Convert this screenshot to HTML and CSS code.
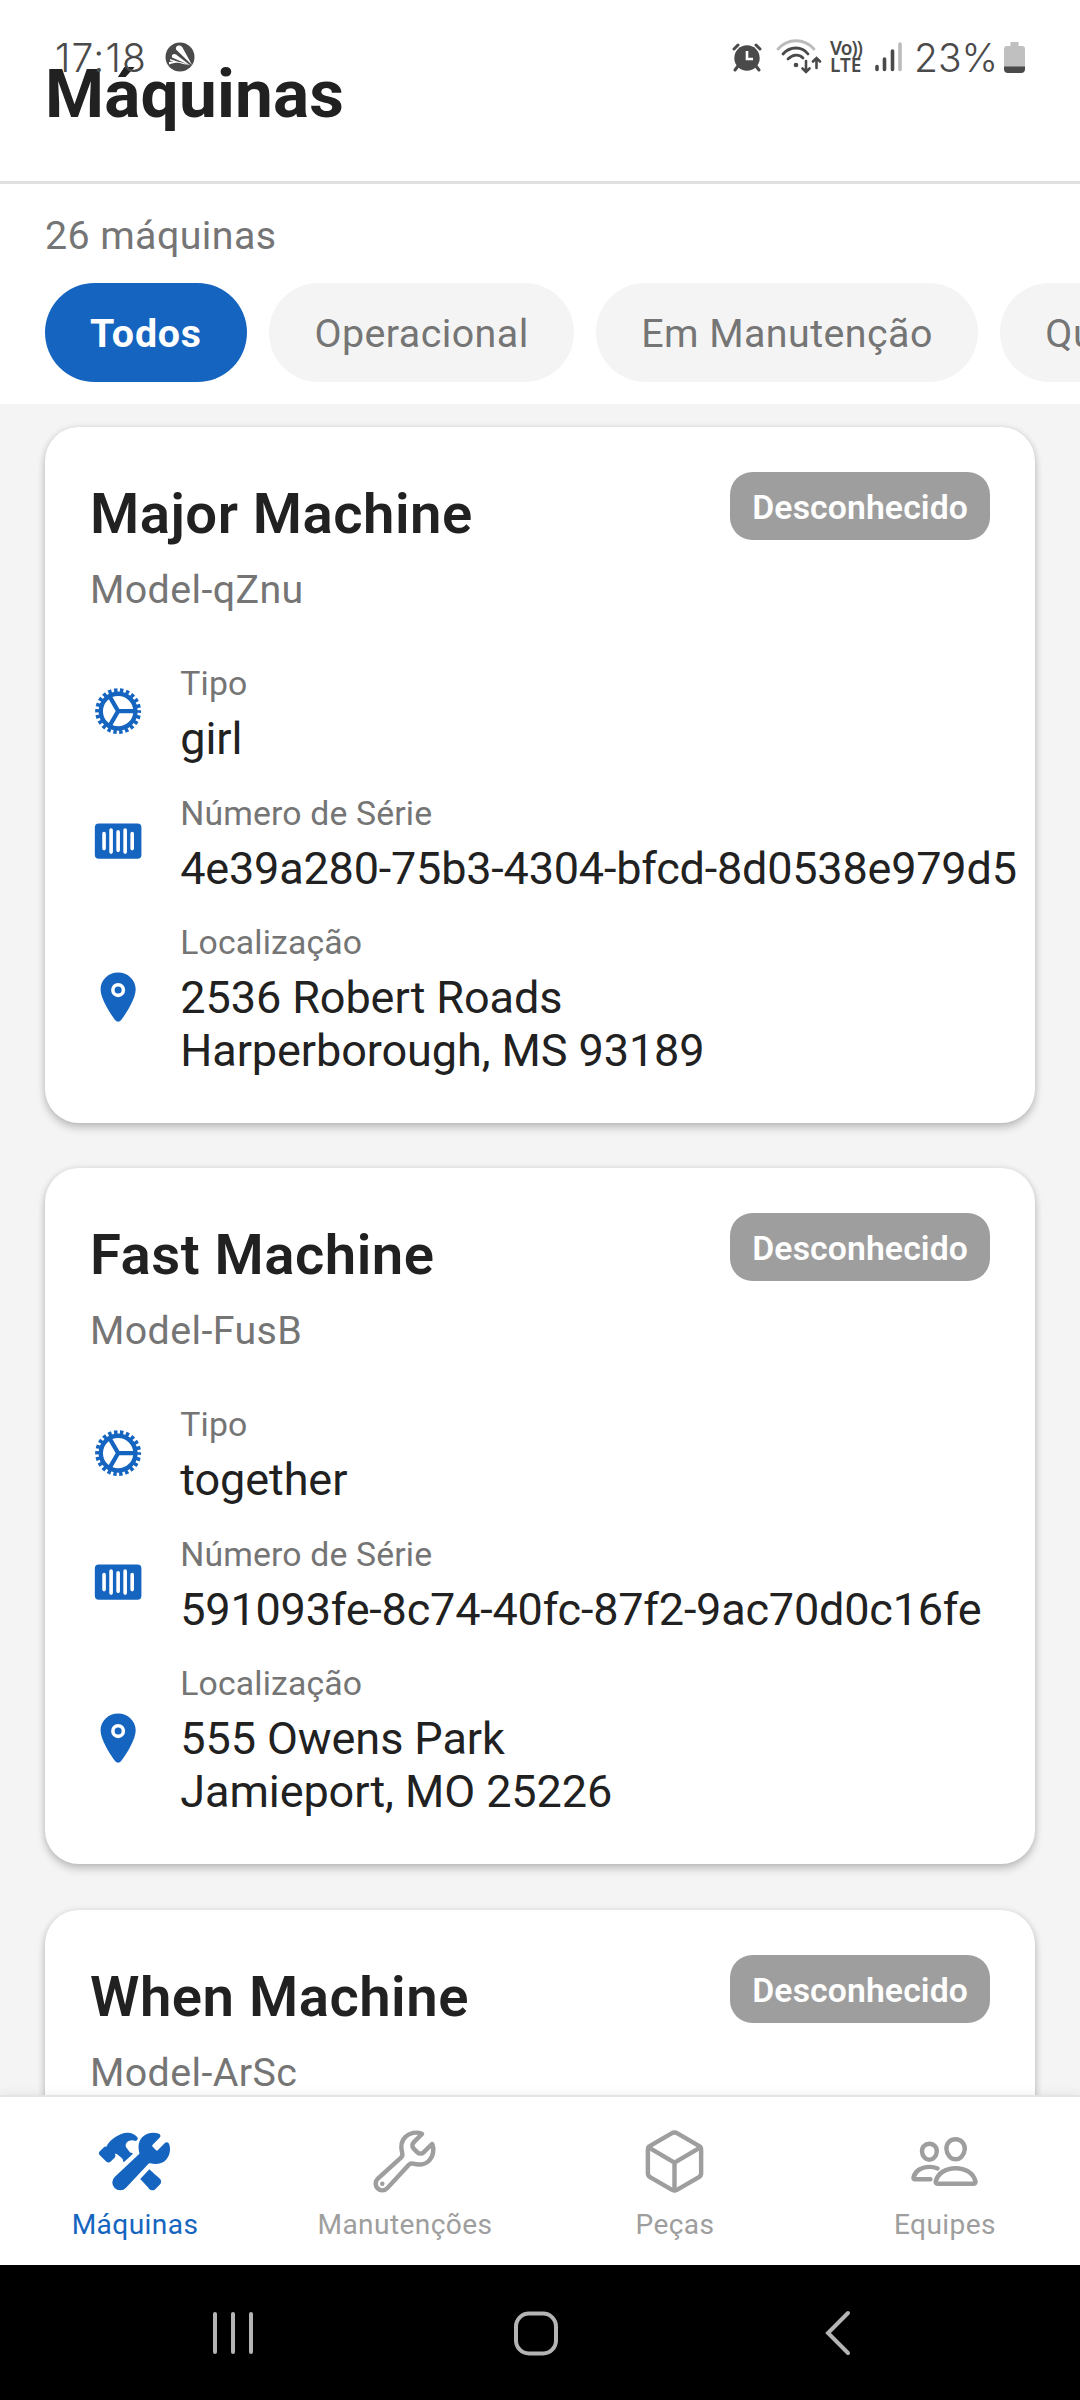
FILE: index.html
```
<!DOCTYPE html>
<html lang="pt-BR">
<head>
<meta charset="utf-8">
<title>Máquinas</title>
<link rel="stylesheet" href="styles.css">
</head>
<body>
<svg class="sprite" aria-hidden="true">
  <symbol id="cog" viewBox="0 0 512 512">
    <g fill="none" stroke="currentColor">
      <circle cx="256" cy="256" r="158" stroke-width="40"/>
      <circle cx="256" cy="256" r="189" stroke-width="40" pathLength="44" stroke-dasharray="1.15 0.85" stroke-dashoffset="0.575"/>
      <path d="M256 256h150M256 256l-75-130M256 256l-75 130" stroke-width="38"/>
    </g>
  </symbol>
  <symbol id="barcode" viewBox="0 0 512 512">
    <rect x="44" y="96" width="424" height="320" rx="36" fill="currentColor"/>
    <path d="M128 188v136M192 156v200M256 172v168M320 156v200M384 188v136" stroke="#fff" stroke-width="33" stroke-linecap="round"/>
  </symbol>
  <symbol id="location" viewBox="0 0 512 512">
    <circle cx="256" cy="192" r="32" fill="currentColor"/>
    <path fill="currentColor" d="M256 32c-88.22 0-160 68.65-160 153 0 40.17 18.31 93.59 54.42 158.78 29 52.34 62.55 99.67 80 123.22a31.75 31.75 0 0051.22 0c17.42-23.55 51-70.88 80-123.22C397.69 278.61 416 225.19 416 185c0-84.35-71.78-153-160-153zm0 224a64 64 0 1164-64 64.07 64.07 0 01-64 64z"/>
  </symbol>
</svg>

<div class="screen">
  <header class="header">
    <h1 class="title">Máquinas</h1>
    <div class="status">
      <span class="clock">17:18</span>
      <svg class="app-icon" viewBox="0 0 30 30"><circle cx="15" cy="15" r="14.500" fill="#4a4a4a"/><path d="M27 23 11 7.500C10 3.500 15 2 17.500 5.500ZM25.500 23.500 7 15.500C6 12.500 9 11 11 12.500ZM24 23.500 5 18.500l0-1.500ZM24 23.500C17 20 10 20 4 22.500l0-2.500C10 19 18 19.500 24 23.500Z" fill="#fff"/></svg>
      <span class="status-spacer"></span>
      <svg class="alarm" viewBox="0 0 30 30"><g fill="none" stroke="#4a4a4a" stroke-width="3" stroke-linecap="round"><path d="M2 7 6 3M28 7 24 3M6 24l-3 4M24 24l3 4"/></g><circle cx="15" cy="16" r="12.700" fill="#4a4a4a"/><path d="M15 9v8h6" fill="none" stroke="#fff" stroke-width="2.600"/></svg>
      <svg class="wifi" viewBox="0 0 46 36"><g fill="none" stroke-linecap="round" stroke-width="2.800"><path d="M2 10C12-1 28-1 38 10" stroke="#bbb"/><path d="M7 15C14 7 26 7 32 15M12 20C17 15 23 15 27 19" stroke="#4a4a4a"/><path d="M30 22v11M26.500 29.500l3.500 3.500 3.500-3.500M40.500 29V19M37 22.500l3.500-3.500 3.500 3.500" stroke="#4a4a4a" stroke-width="2.600"/></g><circle cx="20" cy="26" r="2.300" fill="#4a4a4a"/></svg>
      <span class="lte"><span class="vo">Vo))</span><span>LTE</span></span>
      <svg class="signal" viewBox="0 0 28 30"><g stroke-width="3.600" stroke-linecap="round"><path d="M3 24.500v3M10.500 17v10.500M18.500 9v18.500" stroke="#4a4a4a"/><path d="M26 2v25.500" stroke="#bbb"/></g></svg>
      <span class="percent">23%</span>
      <svg class="battery" viewBox="0 0 21 31"><path d="M6.500 0h8v4H18a3 3 0 0 1 3 3v18H0V7a3 3 0 0 1 3-3h3.500z" fill="#c0c0c0"/><path d="M0 24.500h21V27a4 4 0 0 1-4 4H4a4 4 0 0 1-4-4z" fill="#4a4a4a"/></svg>
    </div>
  </header>

  <section class="filters">
    <p class="count">26 máquinas</p>
    <div class="chips">
      <span class="chip chip-active">Todos</span>
      <span class="chip">Operacional</span>
      <span class="chip">Em Manutenção</span>
      <span class="chip">Quebrada</span>
    </div>
  </section>

  <main class="list">
    <article class="card">
      <div class="card-head"><h2 class="name">Major Machine</h2><span class="badge">Desconhecido</span></div>
      <p class="model">Model-qZnu</p>
      <div class="rows">
        <div class="row"><svg class="icon"><use href="#cog"/></svg><div><p class="label">Tipo</p><p class="value">girl</p></div></div>
        <div class="row"><svg class="icon"><use href="#barcode"/></svg><div><p class="label">Número de Série</p><p class="value serial">4e39a280-75b3-4304-bfcd-8d0538e979d5</p></div></div>
        <div class="row"><svg class="icon"><use href="#location"/></svg><div><p class="label">Localização</p><p class="value">2536 Robert Roads<br>Harperborough, MS 93189</p></div></div>
      </div>
    </article>
    <article class="card">
      <div class="card-head"><h2 class="name">Fast Machine</h2><span class="badge">Desconhecido</span></div>
      <p class="model">Model-FusB</p>
      <div class="rows">
        <div class="row"><svg class="icon"><use href="#cog"/></svg><div><p class="label">Tipo</p><p class="value">together</p></div></div>
        <div class="row"><svg class="icon"><use href="#barcode"/></svg><div><p class="label">Número de Série</p><p class="value serial">591093fe-8c74-40fc-87f2-9ac70d0c16fe</p></div></div>
        <div class="row"><svg class="icon"><use href="#location"/></svg><div><p class="label">Localização</p><p class="value">555 Owens Park<br>Jamieport, MO 25226</p></div></div>
      </div>
    </article>
    <article class="card">
      <div class="card-head"><h2 class="name">When Machine</h2><span class="badge">Desconhecido</span></div>
      <p class="model">Model-ArSc</p>
    </article>
  </main>

  <nav class="tabs">
    <a class="tab tab-active">
      <svg class="tab-icon" viewBox="0 0 512 512" fill="currentColor"><path d="M503.580 126.200a16.850 16.850 0 00-27.070-4.550l-51.150 51.150a11.150 11.150 0 01-15.660 0l-22.480-22.480a11.170 11.170 0 010-15.670l50.880-50.890a16.850 16.850 0 00-5.270-27.400c-39.710-17-89.080-7.450-120 23.290-26.810 26.610-34.830 68-22 113.700a11 11 0 01-3.160 11.100L114.770 365.100a56.760 56.760 0 1080.140 80.180L357 272.080a11 11 0 0110.900-3.170c45 12 86 4 112.430-22 15.200-15 25.810-36.170 29.890-59.710 3.830-22.200 1.410-44.440-6.640-61z"/><path d="M437.330 378.410c-13.940-11.590-43.720-38.400-74.070-66.220l-66.070 70.610c28.240 30 53.800 57.850 65 70.880l.07.08A30 30 0 00383.720 464h1.100a30.110 30.110 0 0021-8.620l.07-.07 33.230-33.370a29.460 29.460 0 00-1.810-43.530zM118.540 214.550a20.480 20.480 0 00-3-10.760 2.760 2.760 0 012.620-4.220h.06c.84.09 5.330.74 11.700 4.610 4.730 2.870 18.230 12.080 41.730 35.540a34.230 34.230 0 007.220 22.120l66.230-61.550a33.730 33.730 0 00-21.600-9.200 2.650 2.650 0 01-.21-.26l-.65-.69-24.540-33.840a28.450 28.450 0 01-4-26.110 35.230 35.230 0 0111.780-16.350c5.690-4.410 18.530-9.720 29.440-10.620a52.920 52.920 0 0115.190.94 65.570 65.570 0 017.060 2.130 15.460 15.460 0 002.150.63 16 16 0 0016.380-25.060c-.26-.35-1.320-1.790-2.890-3.730a91.850 91.850 0 00-9.600-10.360c-8.150-7.360-29.270-19.770-57-19.770a123.130 123.130 0 00-46.300 9c-38.370 15.450-63.470 36.580-75.010 47.790l-.09.09A222.140 222.140 0 0063.700 129.500a27 27 0 00-4.700 11.770 7.330 7.330 0 01-7.710 6.170H50.200a20.650 20.650 0 00-14.590 5.900L6.160 182.050l-.32.32a20.890 20.890 0 00-.24 28.720c.19.2.37.39.57.58L53.670 258A21 21 0 0068.320 264a20.650 20.650 0 0014.590-5.900l29.460-28.790a20.510 20.510 0 006.170-14.760z"/></svg>
      <span>Máquinas</span>
    </a>
    <a class="tab">
      <svg class="tab-icon" viewBox="0 0 512 512" fill="none" stroke="currentColor" stroke-width="32" stroke-linecap="round"><path d="M393.870 190a32.100 32.100 0 01-45.250 0l-26.570-26.570a32.090 32.090 0 010-45.260L382.190 58a1 1 0 00-.3-1.640c-38.820-16.640-89.150-8.160-121.110 23.570-30.580 30.350-32.320 76-21.120 115.840a31.930 31.930 0 01-9.060 32.080L64 380a48.170 48.170 0 1068 68l153.860-167a31.930 31.930 0 0131.600-9.130c39.540 10.590 84.540 8.600 114.720-21.190 32.490-32 39.500-88.560 23.750-120.930a1 1 0 00-1.600-.26z"/><circle cx="96" cy="416" r="16" fill="currentColor" stroke="none"/></svg>
      <span>Manutenções</span>
    </a>
    <a class="tab">
      <svg class="tab-icon" viewBox="0 0 512 512" fill="none" stroke="currentColor" stroke-width="32" stroke-linecap="round" stroke-linejoin="round"><path d="M448 341.370V170.610A32 32 0 00432.110 143l-152-88.460a47.940 47.940 0 00-48.240 0L79.890 143A32 32 0 0064 170.610v170.760A32 32 0 0079.890 369l152 88.460a48 48 0 0048.240 0l152-88.460A32 32 0 00448 341.370z"/><path d="M69 153.990l187 110 187-110M256 463.990v-200"/></svg>
      <span>Peças</span>
    </a>
    <a class="tab">
      <svg class="tab-icon" viewBox="0 0 512 512" fill="none" stroke="currentColor" stroke-width="32" stroke-linecap="round" stroke-linejoin="round"><path d="M402 168c-2.930 40.670-33.100 72-66 72s-63.120-31.320-66-72c-3-42.310 26.370-72 66-72s69 30.460 66 72z"/><path d="M336 304c-65.170 0-127.840 32.370-143.540 95.410-2.080 8.340 3.150 16.590 11.720 16.590h263.650c8.570 0 13.770-8.250 11.720-16.590C463.850 335.360 401.180 304 336 304z"/><path d="M200 185.940c-2.340 32.480-26.720 58.060-53 58.060s-50.700-25.570-53-58.060C91.610 152.150 115.340 128 147 128s55.390 24.770 53 57.940zM206 306c-18.050-8.270-37.930-11.450-59-11.450-52 0-102.100 25.850-114.650 76.200-1.650 6.660 2.530 13.250 9.370 13.250H154"/></svg>
      <span>Equipes</span>
    </a>
  </nav>

  <footer class="sysnav">
    <svg viewBox="0 0 44 48"><path d="M4 5v38M22 5v38M40 5v38" stroke="#b4b4b4" stroke-width="4" stroke-linecap="round"/></svg>
    <svg viewBox="0 0 44 48"><rect x="2" y="4.500" width="40" height="40" rx="13" fill="none" stroke="#b4b4b4" stroke-width="4"/></svg>
    <svg viewBox="0 0 44 48"><path d="M32 4 12 24 32 44" fill="none" stroke="#b4b4b4" stroke-width="4" stroke-linecap="round"/></svg>
  </footer>
</div>
</body>
</html>
```

FILE: styles.css
```
* { box-sizing: border-box; }
body { margin: 0; font-family: Roboto, "Liberation Sans", sans-serif; }
h1, h2, p { margin: 0; font-weight: 400; }
.sprite { position: absolute; width: 0; height: 0; }

.screen {
  width: 1080px;
  height: 2400px;
  display: flex;
  flex-direction: column;
  overflow: hidden;
  background: #f4f4f4;
}

.header {
  position: relative;
  flex: none;
  height: 184px;
  padding: 54px 45px 0;
  background: #fff;
  border-bottom: 3px solid #e0e0e0;
}
.title { font-size: 67.5px; line-height: 79px; font-weight: 700; letter-spacing: 0.2px; color: #212121; }

.status {
  position: absolute;
  inset: 0 0 auto 0;
  height: 114px;
  padding: 0 55px;
  display: flex;
  align-items: center;
  color: #4a4a4a;
}
.clock, .percent { font-family: Inter, sans-serif; font-size: 39px; font-weight: 350; }
.clock { width: 110px; letter-spacing: 1.2px; }
.status-spacer { flex: 1; }
.app-icon { width: 30px; height: 30px; }
.alarm { width: 30px; height: 30px; margin-right: 14px; }
.wifi { width: 46px; height: 36px; margin-right: 8px; }
.lte {
  display: flex;
  flex-direction: column;
  width: 44px;
  font: 600 19px/17px "Noto Sans", sans-serif;
}
.vo { letter-spacing: -0.9px; }
.signal { width: 28px; height: 30px; margin-right: 12px; }
.percent { width: 90px; }
.battery { width: 21px; height: 31px; }

.filters { flex: none; height: 220px; padding: 22px 0 0 45px; background: #fff; overflow: hidden; }
.count { font-size: 39.375px; line-height: 60px; letter-spacing: 0.4px; color: #757575; }
.chips { display: flex; gap: 22.5px; margin-top: 17px; }
.chip {
  flex: none;
  height: 99px;
  padding: 0 45px;
  border-radius: 50px;
  background: #f4f4f4;
  color: #757575;
  font-size: 39.375px;
  line-height: 102px;
  letter-spacing: 0.45px;
}
.chip-active { background: #1565c0; color: #fff; font-weight: 700; letter-spacing: 0.8px; }

.list {
  flex: 1;
  min-height: 0;
  overflow: hidden;
  padding: 23px 45px 0;
  display: flex;
  flex-direction: column;
  gap: 45.4px;
}
.card {
  flex: none;
  height: 696px;
  padding: 45px;
  background: #fff;
  border-radius: 34px;
  box-shadow: 0 5px 9px rgba(0, 0, 0, .2), 0 0 6px rgba(0, 0, 0, .1);
}
.card-head { display: flex; justify-content: space-between; align-items: flex-start; height: 84px; }
.name { font-size: 56.25px; line-height: 84px; font-weight: 600; letter-spacing: 0.5px; color: #212121; }
.badge {
  height: 68px;
  padding: 0 22px;
  border-radius: 22.5px;
  background: #9e9e9e;
  color: #fff;
  font-size: 33.75px;
  line-height: 71px;
  font-weight: 600;
  letter-spacing: 0.1px;
}
.model { margin-top: 4px; font-size: 39.375px; line-height: 60px; letter-spacing: 0.4px; color: #757575; }
.rows { display: flex; flex-direction: column; gap: 21.5px; margin-top: 38px; }
.row { display: flex; align-items: center; gap: 34px; padding-bottom: 1px; white-space: nowrap; }
.icon { flex: none; width: 56.25px; height: 56.25px; color: #1565c0; }
.label { margin-bottom: 2px; font-size: 33.75px; line-height: 52px; letter-spacing: 0.15px; color: #757575; }
.value { font-size: 45px; line-height: 53px; letter-spacing: -0.08px; color: #212121; }
.serial { letter-spacing: -0.2px; }

.tabs {
  position: relative;
  flex: none;
  height: 170px;
  display: grid;
  grid-template-columns: repeat(4, 1fr);
  background: #fff;
  border-top: 2px solid #e4e4e4;
  box-shadow: 0 -2px 10px rgba(0, 0, 0, .06);
}
.tab {
  display: flex;
  flex-direction: column;
  align-items: center;
  padding-top: 29px;
  font-size: 28.125px;
  line-height: 34px;
  letter-spacing: 0.4px;
  color: #9e9e9e;
}
.tab-active { color: #1565c0; }
.tab-icon { width: 71px; height: 71px; margin: 0 2px 11px 0; }

.sysnav { flex: none; height: 135px; display: flex; justify-content: space-between; align-items: center; padding: 0 220px 0 211px; background: #000; }
.sysnav svg { width: 44px; height: 48px; }
```
